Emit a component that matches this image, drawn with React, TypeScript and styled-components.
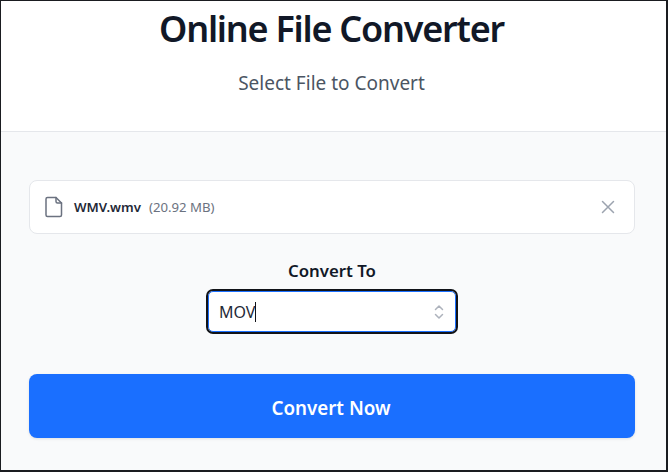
import styled, { createGlobalStyle } from 'styled-components';

const GlobalStyle = createGlobalStyle`
  html, body {
    margin: 0;
    padding: 0;
    background: #ffffff;
  }
  * {
    box-sizing: border-box;
  }
`;

const Frame = styled.div`
  width: 668px;
  height: 472px;
  border: 1px solid #1a1c20;
  border-bottom-width: 2px;
  border-right-width: 2px;
  display: flex;
  flex-direction: column;
  overflow: hidden;
  font-family: 'Noto Sans', 'Liberation Sans', sans-serif;
  background: #ffffff;
`;

const Header = styled.header`
  height: 130px;
  flex-shrink: 0;
  display: flex;
  flex-direction: column;
  align-items: center;
  padding: 8px 4px 0 0;
`;

const Title = styled.h1`
  margin: 0;
  font-size: 36px;
  line-height: 40px;
  font-weight: 600;
  letter-spacing: -1.25px;
  color: #111827;
`;

const Subtitle = styled.p`
  margin: 20px 0 0;
  font-size: 19px;
  line-height: 28px;
  color: #4b5563;
`;

const Panel = styled.main`
  flex: 1;
  background: #f9fafb;
  border-top: 1px solid #e5e7eb;
  padding: 48px 31px 0 28px;
  display: flex;
  flex-direction: column;
  align-items: center;
`;

const FileRow = styled.div`
  width: 100%;
  height: 54px;
  background: #ffffff;
  border: 1px solid #e5e7eb;
  border-radius: 8px;
  display: flex;
  align-items: center;
  padding: 0 14px;
`;

const FileName = styled.span`
  margin-left: 10px;
  font-size: 13.2px;
  font-weight: 600;
  color: #1f2937;
`;

const FileSize = styled.span`
  margin-left: 8px;
  font-size: 13.2px;
  color: #6b7280;
`;

const RemoveButton = styled.button`
  margin-left: auto;
  margin-right: 4px;
  width: 16px;
  height: 16px;
  padding: 0;
  border: 0;
  background: none;
  display: flex;
  color: #9ca3af;
`;

const FieldLabel = styled.label`
  margin-top: 27px;
  font-size: 16.8px;
  line-height: 20px;
  font-weight: 600;
  color: #111827;
`;

const SelectBox = styled.div`
  margin-top: 10px;
  width: 248px;
  height: 41px;
  background: #ffffff;
  border: 1px solid #1a6fff;
  border-radius: 5px;
  outline: 2px solid #111318;
  outline-offset: 0;
  display: flex;
  align-items: center;
  padding: 0 10px 0 10px;
  font-size: 16px;
  color: #1f2937;
`;

const Caret = styled.span`
  width: 1px;
  height: 20px;
  background: #111318;
`;

const Chevrons = styled.svg`
  margin-left: auto;
  color: #adb2bc;
`;

const ConvertButton = styled.button`
  margin-top: 42px;
  width: 100%;
  height: 64px;
  flex-shrink: 0;
  border: 0;
  border-radius: 8px;
  padding: 3px 2px 0 0;
  background: #1a6fff;
  box-shadow: 0 1px 3px rgba(0, 0, 0, 0.1);
  color: #ffffff;
  font-family: inherit;
  font-size: 18.8px;
  font-weight: 600;
`;

function App() {
  return (
    <>
      <GlobalStyle />
      <Frame>
        <Header>
          <Title>Online File Converter</Title>
          <Subtitle>Select File to Convert</Subtitle>
        </Header>
        <Panel>
          <FileRow>
            <svg width="20" height="24" viewBox="0 0 20 24" fill="none" stroke="#6b7280" strokeWidth="1.5" strokeLinejoin="round" strokeLinecap="round">
              <path d="M3.5 2.5h8.5l5.5 5.5v12a1.5 1.5 0 0 1-1.5 1.5H3.5A1.5 1.5 0 0 1 2 20V4a1.5 1.5 0 0 1 1.5-1.5z" />
              <path d="M12 2.5V6.5a1.5 1.5 0 0 0 1.5 1.5h4" />
            </svg>
            <FileName>WMV.wmv</FileName>
            <FileSize>(20.92 MB)</FileSize>
            <RemoveButton aria-label="Remove file">
              <svg width="16" height="16" viewBox="0 0 16 16" fill="none" stroke="currentColor" strokeWidth="1.5" strokeLinecap="round">
                <path d="M2.5 2.5l11 11M13.5 2.5l-11 11" />
              </svg>
            </RemoveButton>
          </FileRow>
          <FieldLabel>Convert To</FieldLabel>
          <SelectBox>
            MOV
            <Caret />
            <Chevrons width="12" height="18" viewBox="0 0 12 18" fill="none" stroke="currentColor" strokeWidth="1.5" strokeLinecap="round" strokeLinejoin="round">
              <path d="M2.5 6.5L6 3l3.5 3.5M2.5 11.5L6 15l3.5-3.5" />
            </Chevrons>
          </SelectBox>
          <ConvertButton>Convert Now</ConvertButton>
        </Panel>
      </Frame>
    </>
  );
}

export default App;
